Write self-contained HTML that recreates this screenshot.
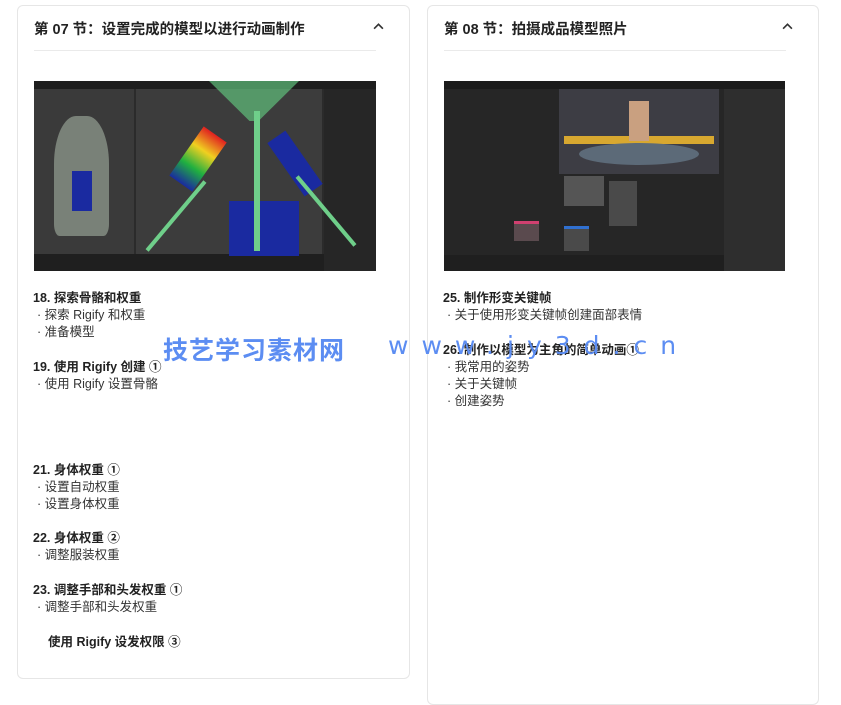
<!DOCTYPE html>
<html><head><meta charset="utf-8"><style>
*{margin:0;padding:0;box-sizing:border-box}
body{width:841px;height:696px;background:#fff;font-family:"Liberation Sans","Noto Sans CJK SC",sans-serif;position:relative;overflow:hidden;color:#1a1a1a}
.card{position:absolute;border:1px solid #e6e6e6;border-radius:6px;background:#fff}
.hd{position:absolute;left:16px;top:12px;font-size:14.5px;font-weight:bold;color:#222}
.chev{position:absolute;top:15px;width:11px;height:11px}
.sep{position:absolute;top:44px;height:1px;background:#eaeaea}
.img{position:absolute;top:75px;height:190px;background:#2b2b2b;overflow:hidden}
.t{position:absolute;font-size:12.5px;font-weight:bold;color:#222}
.s{position:absolute;font-size:12.5px;color:#333}
.wm{position:absolute;color:#5c8df2;font-weight:bold;font-size:25px;top:331px}
</style></head><body>
<div class="card" style="left:17px;top:5px;width:393px;height:674px">
<div class="hd">第 07 节：设置完成的模型以进行动画制作</div>
<svg class="chev" style="left:355px" viewBox="0 0 10 10"><path d="M1 7 L5 3 L9 7" stroke="#333" stroke-width="1.5" fill="none"/></svg>
<div class="sep" style="left:16px;width:342px"></div>
<div class="img" style="left:16px;width:342px">
 <div style="position:absolute;left:0;top:0;width:342px;height:8px;background:#1e1e1e"></div>
 <div style="position:absolute;left:0;top:8px;width:100px;height:165px;background:#3a3a3a"></div>
 <div style="position:absolute;left:102px;top:8px;width:186px;height:165px;background:#3c3c3c"></div>
 <div style="position:absolute;left:290px;top:8px;width:52px;height:182px;background:#262626"></div>
 <div style="position:absolute;left:0;top:173px;width:290px;height:17px;background:#1f1f1f"></div>
 <div style="position:absolute;left:20px;top:35px;width:55px;height:120px;background:#8a9488;border-radius:40% 40% 10% 10%;opacity:.8"></div>
 <div style="position:absolute;left:38px;top:90px;width:20px;height:40px;background:#1a2aa0"></div>
 <div style="position:absolute;left:150px;top:48px;width:28px;height:60px;background:linear-gradient(#e02020,#f0d020,#20b040,#1a2aa0);transform:rotate(35deg)"></div>
 <div style="position:absolute;left:250px;top:50px;width:22px;height:65px;background:#1a2aa0;transform:rotate(-35deg)"></div>
 <div style="position:absolute;left:195px;top:120px;width:70px;height:55px;background:#1a2aa0"></div>
 <div style="position:absolute;left:175px;top:0;width:90px;height:40px;background:#5fbf7a;opacity:.7;clip-path:polygon(0 0,100% 0,55% 100%,45% 100%)"></div>
 <div style="position:absolute;left:220px;top:30px;width:6px;height:140px;background:#6fcf8a"></div>
 <div style="position:absolute;left:140px;top:90px;width:4px;height:90px;background:#6fcf8a;transform:rotate(40deg)"></div>
 <div style="position:absolute;left:290px;top:85px;width:4px;height:90px;background:#6fcf8a;transform:rotate(-40deg)"></div>
</div>
</div>
<div class="card" style="left:427px;top:5px;width:392px;height:700px">
<div class="hd">第 08 节：拍摄成品模型照片</div>
<svg class="chev" style="left:354px" viewBox="0 0 10 10"><path d="M1 7 L5 3 L9 7" stroke="#333" stroke-width="1.5" fill="none"/></svg>
<div class="sep" style="left:16px;width:342px"></div>
<div class="img" style="left:16px;width:341px;background:#262626">
 <div style="position:absolute;left:0;top:0;width:341px;height:8px;background:#1b1b1b"></div>
 <div style="position:absolute;left:115px;top:8px;width:160px;height:85px;background:#3d3d44"></div>
 <div style="position:absolute;left:120px;top:55px;width:150px;height:8px;background:#d8a830"></div>
 <div style="position:absolute;left:135px;top:62px;width:120px;height:22px;background:#5c6a78;border-radius:50%"></div>
 <div style="position:absolute;left:185px;top:20px;width:20px;height:40px;background:#c9a080"></div>
 <div style="position:absolute;left:280px;top:8px;width:61px;height:182px;background:#2e2e2e"></div>
 <div style="position:absolute;left:120px;top:95px;width:40px;height:30px;background:#555"></div>
 <div style="position:absolute;left:165px;top:100px;width:28px;height:45px;background:#4a4a4a"></div>
 <div style="position:absolute;left:70px;top:140px;width:25px;height:20px;background:#5a4a4e;border-top:3px solid #d04070"></div>
 <div style="position:absolute;left:120px;top:145px;width:25px;height:25px;background:#4a4a4a;border-top:3px solid #3070d0"></div>
 <div style="position:absolute;left:0;top:174px;width:280px;height:16px;background:#1f1f1f"></div>
</div>
</div>
<div class="t" style="left:33px;top:287px">18. 探索骨骼和权重</div>
<div class="s" style="left:37px;top:304px">· 探索 Rigify 和权重</div>
<div class="s" style="left:37px;top:321px">· 准备模型</div>
<div class="t" style="left:33px;top:356px">19. 使用 Rigify 创建 ①</div>
<div class="s" style="left:37px;top:373px">· 使用 Rigify 设置骨骼</div>
<div class="t" style="left:33px;top:459px">21. 身体权重 ①</div>
<div class="s" style="left:37px;top:476px">· 设置自动权重</div>
<div class="s" style="left:37px;top:493px">· 设置身体权重</div>
<div class="t" style="left:33px;top:527px">22. 身体权重 ②</div>
<div class="s" style="left:37px;top:544px">· 调整服装权重</div>
<div class="t" style="left:33px;top:579px">23. 调整手部和头发权重 ①</div>
<div class="s" style="left:37px;top:596px">· 调整手部和头发权重</div>
<div class="t" style="left:48px;top:631px">使用 Rigify 设发权限 ③</div>
<div class="t" style="left:443px;top:287px">25. 制作形变关键帧</div>
<div class="s" style="left:447px;top:304px">· 关于使用形变关键帧创建面部表情</div>
<div class="t" style="left:443px;top:339px">26. 制作以模型为主角的简单动画①</div>
<div class="s" style="left:447px;top:356px">· 我常用的姿势</div>
<div class="s" style="left:447px;top:373px">· 关于关键帧</div>
<div class="s" style="left:447px;top:390px">· 创建姿势</div>
<div class="wm" style="left:163px;font-family:'Noto Sans CJK SC',sans-serif;letter-spacing:1px">技艺学习素材网</div>
<div class="wm" style="left:388px;letter-spacing:13px;font-family:'DejaVu Sans',sans-serif;font-weight:normal">www.jy3d.cn</div>
</body></html>
